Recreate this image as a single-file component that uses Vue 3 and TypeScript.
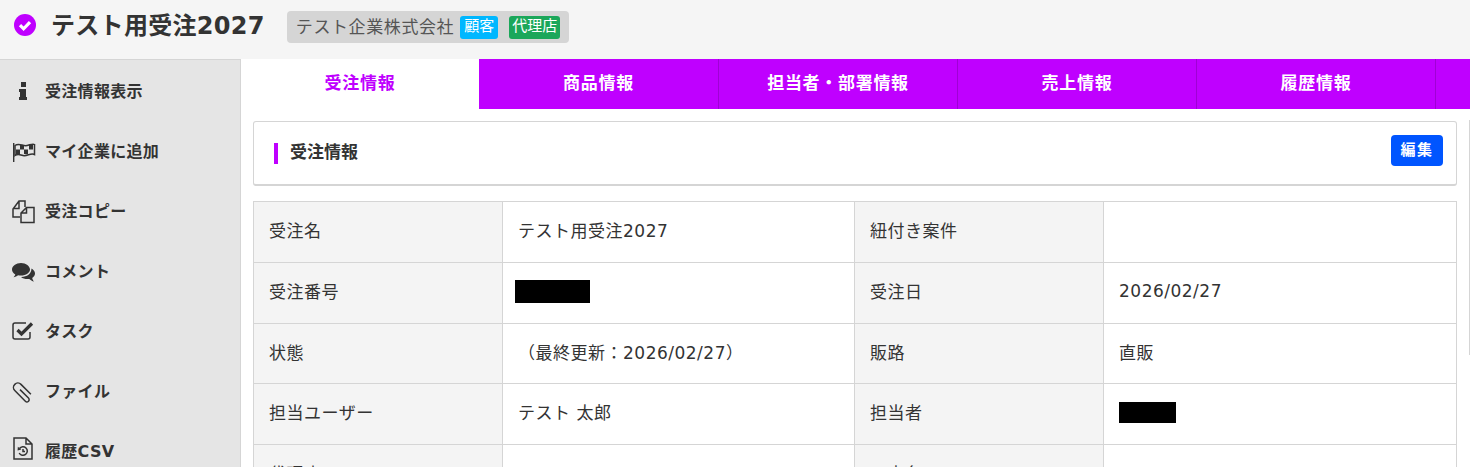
<template>
  <div class="page">
    <header class="head">
      <svg class="status-icon" viewBox="0 0 22 22" width="22" height="22">
        <circle cx="11" cy="11" r="11" fill="#bf00ff" />
        <path d="M6 11.200l3.600 3.600 6.400-6.600" fill="none" stroke="#fff" stroke-width="3.200" />
      </svg>
      <h1 class="title">テスト用受注2027</h1>
      <div class="company">
        <span class="company-name">テスト企業株式会社</span>
        <span class="badge badge-blue">顧客</span>
        <span class="badge badge-green">代理店</span>
      </div>
    </header>

    <div class="body">
      <nav class="side">
        <a class="side-item">
          <svg class="side-icon" viewBox="0 0 24 24"><path d="M10 3h5v5h-5zM8 10h7v8h1v3H8v-3h1v-5H8z" /></svg>
          <span>受注情報表示</span>
        </a>
        <a class="side-item">
          <svg class="side-icon" viewBox="0 0 24 24">
            <path d="M2 4h1.400v19H2z" />
            <path d="M9 6h4v4.500H9zM13 10.500h4V15h-4zM5 10.500h4V15H5zM18 6h4v4.500h-4z" />
            <path class="line" d="M4 6.500c4-3 8 1 12 0s6-2 7.500-1v10c-3.500-2-7.500 2-11.500 1s-5-2-8 0z" />
          </svg>
          <span>マイ企業に追加</span>
        </a>
        <a class="side-item">
          <svg class="side-icon" viewBox="0 0 24 24">
            <path class="line" d="M9 18H2v-8l6-8h6v6M8 2v7.500H2" />
            <path class="line" d="M15.500 8.500H23v15H10V14zM15.500 8.500V14H10" />
          </svg>
          <span>受注コピー</span>
        </a>
        <a class="side-item">
          <svg class="side-icon" viewBox="0 0 24 24">
            <path d="M10 4C5 4 1 7 1 10.500c0 2 1.300 3.800 3.300 5-.3 1-1 2-1.800 2.700 1.700-.2 3.300-.9 4.500-1.900 1 .2 2 .3 3 .3 5 0 9-3 9-6.100S15 4 10 4z" />
            <path d="M20.500 9.500c2 1.200 3.500 3 3.500 5 0 1.800-1.100 3.400-2.800 4.500.2 1 .8 2.500 1.800 3.500-1.800-.3-3.500-1.300-4.700-2.500-.6.1-1.200.1-1.800.1-2.600 0-4.900-.8-6.500-2.200 5.500.2 10.500-3 10.500-8.400z" />
          </svg>
          <span>コメント</span>
        </a>
        <a class="side-item">
          <svg class="side-icon" viewBox="0 0 24 24">
            <path class="line" d="M19 13v5a2 2 0 0 1-2 2H4a2 2 0 0 1-2-2V6a2 2 0 0 1 2-2h11" />
            <path class="line thick" d="M6.500 11l4 4L21 4.500" />
          </svg>
          <span>タスク</span>
        </a>
        <a class="side-item">
          <svg class="side-icon" viewBox="0 0 24 24">
            <path class="line" transform="rotate(45 11.400 13)" d="M8 13h12a2.200 2.200 0 0 1 0 4.400H5a4.400 4.400 0 0 1 0-8.800h14" />
          </svg>
          <span>ファイル</span>
        </a>
        <a class="side-item">
          <svg class="side-icon" viewBox="0 0 24 24">
            <path class="line" d="M3-1h12l6 6v15H3zM15-1v6h6" />
            <path class="line" d="M8.500 9.500a4.300 4.300 0 1 1-.3 4.500M12 10v2.500h2" />
            <path d="M6.800 7.800l3.500 2.800-3.700.8z" />
          </svg>
          <span>履歴CSV</span>
        </a>
      </nav>

      <main class="content">
        <div class="tabs">
          <a v-for="(tab, i) in tabs" :key="tab" class="tab" :class="{ active: i === 0 }">{{ tab }}</a>
        </div>

        <div class="inner">
          <section class="card">
            <h2 class="card-title"><span>受注情報</span></h2>
            <button class="edit"><span>編集</span></button>
          </section>

          <table class="info">
            <colgroup>
              <col class="col-label" />
              <col class="col-value" />
              <col class="col-label" />
              <col class="col-value2" />
            </colgroup>
            <tbody>
              <tr>
                <th>受注名</th>
                <td>テスト用受注2027</td>
                <th>紐付き案件</th>
                <td></td>
              </tr>
              <tr>
                <th>受注番号</th>
                <td><div class="redact redact-no"></div></td>
                <th>受注日</th>
                <td>2026/02/27</td>
              </tr>
              <tr>
                <th>状態</th>
                <td>（最終更新：2026/02/27）</td>
                <th>販路</th>
                <td>直販</td>
              </tr>
              <tr>
                <th>担当ユーザー</th>
                <td>テスト 太郎</td>
                <th>担当者</th>
                <td><div class="redact redact-name"></div></td>
              </tr>
              <tr>
                <th>代理店</th>
                <td></td>
                <th>工事名</th>
                <td></td>
              </tr>
            </tbody>
          </table>
        </div>
        <div class="scroll-line"></div>
      </main>
    </div>
  </div>
</template>

<script setup lang="ts">
const tabs: string[] = ['受注情報', '商品情報', '担当者・部署情報', '売上情報', '履歴情報']
</script>

<style>
html,
body {
  margin: 0;
  overflow: hidden;
}
</style>

<style scoped>
.page {
  width: 1470px;
  height: 467px;
  overflow: hidden;
  background: #fff;
  color: #333;
  font-family: "DejaVu Sans", "Noto Sans CJK JP", sans-serif;
  letter-spacing: 0.3px;
}

.head {
  display: flex;
  align-items: center;
  height: 59px;
  padding: 0 0 5px 14px;
  box-sizing: border-box;
  background: #f5f5f5;
}

.status-icon {
  flex: none;
  margin-bottom: 4px;
}

.title {
  margin: 0 0 3px 15px;
  font-size: 24px;
  font-weight: 700;
  line-height: 32px;
  letter-spacing: 0.3px;
}

.company {
  display: flex;
  align-items: center;
  height: 32px;
  margin-left: 22px;
  padding: 0 9px;
  border-radius: 4px;
  background: #d5d5d5;
  color: #555;
  font-size: 17px;
  letter-spacing: 0.6px;
}

.company-name {
  margin-right: 6px;
  padding-bottom: 4px;
}

.badge {
  height: 23px;
  line-height: 21px;
  border-radius: 3px;
  color: #fff;
  font-size: 15px;
  letter-spacing: 0;
}

.badge-blue {
  padding: 0 4px;
  background: #00b7ff;
}

.badge-green {
  margin-left: 11px;
  padding: 0 3px;
  background: #1ba75a;
}

.body {
  display: flex;
}

.side {
  flex: none;
  width: 241px;
  box-sizing: border-box;
  height: 408px;
  padding-top: 1px;
  border-top: 1px solid #d5d5d5;
  border-right: 1px solid #d5d5d5;
  background: #e5e5e5;
}

.side-item {
  display: flex;
  align-items: center;
  gap: 10px;
  height: 60px;
  padding-left: 11px;
  font-size: 16px;
  font-weight: 700;
}

.side-item span {
  padding-bottom: 2px;
}

.side-icon {
  flex: none;
  width: 24px;
  height: 24px;
  overflow: visible;
  fill: #333;
}

.line {
  fill: none;
  stroke: #333;
  stroke-width: 1.5;
}

.thick {
  stroke-width: 3.2;
}

.content {
  position: relative;
  flex: 1;
  min-width: 0;
}

.tabs {
  display: flex;
  height: 50px;
  background: #bf00ff;
}

.tab {
  flex: none;
  width: 239px;
  box-sizing: border-box;
  border-right: 1px solid #a000d6;
  color: #fff;
  font-size: 17px;
  font-weight: 700;
  line-height: 48px;
  letter-spacing: 0.7px;
  text-align: center;
}

.tab.active {
  width: 238px;
  border-right: 0;
  background: #fff;
  color: #bf00ff;
}

.tab:nth-child(2) {
  width: 240px;
}

.inner {
  padding: 12px 13px 0 12px;
}

.card {
  display: flex;
  align-items: center;
  justify-content: space-between;
  box-sizing: border-box;
  height: 65px;
  padding: 0 13px 0 20px;
  border: 1px solid #d5d5d5;
  border-bottom-width: 2px;
  border-radius: 3px;
}

.card-title {
  display: flex;
  align-items: center;
  margin: 0;
  padding-left: 12px;
  border-left: 4px solid #bf00ff;
  font-size: 17px;
  font-weight: 700;
  line-height: 18px;
  letter-spacing: 0;
}

.card-title span {
  padding-bottom: 3px;
}

.edit {
  width: 52px;
  height: 31px;
  margin-bottom: 6px;
  padding: 0 0 3px;
  border: 0;
  border-radius: 4px;
  background: #0055ff;
  color: #fff;
  font-family: inherit;
  font-size: 15px;
  font-weight: 700;
  letter-spacing: 1.5px;
}

.info {
  width: 1203px;
  margin-top: 15px;
  table-layout: fixed;
  border-collapse: collapse;
  font-size: 17px;
  letter-spacing: 0.5px;
}

.col-label {
  width: 249px;
}

.col-value {
  width: 352px;
}

.col-value2 {
  width: 353px;
}

.info tr {
  height: 61px;
}

.info tr:nth-child(3) {
  height: 60px;
}

.info th,
.info td {
  padding: 0 15px 5px;
  border: 1px solid #d5d5d5;
  font-weight: 400;
  text-align: left;
}

.info th {
  background: #f4f4f4;
}

.redact {
  margin-top: 1px;
  background: #000;
}

.redact-no {
  width: 75px;
  height: 23px;
  margin-left: -3px;
}

.redact-name {
  width: 57px;
  height: 21px;
}

.scroll-line {
  position: absolute;
  top: 61px;
  right: 0;
  width: 1px;
  height: 235px;
  background: #d5d5d5;
}
</style>
